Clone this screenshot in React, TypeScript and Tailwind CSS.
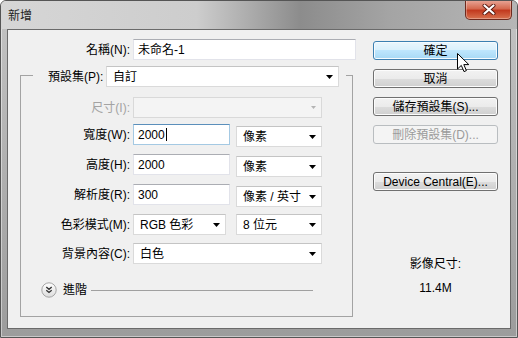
import type { ReactNode } from 'react';
import { clsx } from 'clsx';

function Arrow({ disabled }: { disabled?: boolean }) {
  return disabled ? (
    <svg width="5" height="3" viewBox="0 0 5 3">
      <polygon points="0,0 5,0 2.5,3" fill="#b4b4b4" />
    </svg>
  ) : (
    <svg width="7" height="4" viewBox="0 0 7 4">
      <polygon points="0,0 7,0 3.5,4" fill="#000" />
    </svg>
  );
}

function Combo({
  width,
  value,
  disabled,
  className,
}: {
  width: string;
  value?: string;
  disabled?: boolean;
  className?: string;
}) {
  return (
    <div
      className={clsx(
        'flex h-[21px] shrink-0 items-center justify-between border pl-[6px] pr-[5px]',
        disabled
          ? 'border-[#d9d9d9] bg-[#f4f4f4]'
          : 'border-[#dadada] border-t-[#c4c4c4] bg-white',
        width,
        className,
      )}
    >
      <span className="whitespace-pre leading-none">{value}</span>
      <Arrow disabled={disabled} />
    </div>
  );
}

function TextBox({
  width,
  value,
  focused,
}: {
  width: string;
  value: string;
  focused?: boolean;
}) {
  return (
    <div
      className={clsx(
        'flex h-[21px] shrink-0 items-center border bg-white pl-[4px]',
        focused
          ? 'border-[#a4c9e3] border-t-[#5b8fbb]'
          : 'border-[#e2e3ea] border-t-[#abadb3]',
        width,
      )}
    >
      <span className="leading-none">{value}</span>
      {focused ? <span className="ml-px h-[13px] w-px bg-black" /> : null}
    </div>
  );
}

function Label({ width, children, disabled }: { width: string; children: ReactNode; disabled?: boolean }) {
  return (
    <div
      className={clsx(
        'flex h-[21px] shrink-0 items-center justify-end pr-[3px]',
        disabled ? 'text-[#a3a3a3]' : 'text-black',
        width,
      )}
    >
      {children}
    </div>
  );
}

function Button({
  children,
  hot,
  disabled,
  className,
}: {
  children: ReactNode;
  hot?: boolean;
  disabled?: boolean;
  className?: string;
}) {
  return (
    <div
      className={clsx(
        'flex h-[19px] w-[125px] items-center justify-center rounded-[3px] border leading-none',
        hot
          ? 'border-[#3c7fb1] bg-[linear-gradient(#eaf6fd,#d9f0fc_50%,#bee6fd_50%,#a7d9f5)] shadow-[inset_0_0_0_1px_#f6fbfe]'
          : disabled
            ? 'border-[#b9bdc0] bg-[#f4f4f4] text-[#9b9b9b]'
            : 'border-[#707070] bg-[linear-gradient(#f2f2f2,#ebebeb_50%,#dddddd_50%,#cfcfcf)] shadow-[inset_0_0_0_1px_#fcfcfc]',
        className,
      )}
    >
      {children}
    </div>
  );
}

export default function App() {
  return (
    <div className="relative flex h-[338px] w-[518px] flex-col overflow-hidden rounded-t-[6px] border border-[#555] bg-[linear-gradient(180deg,#c4c4c4,#9c9c9c)] font-['Liberation_Sans','Noto_Sans_CJK_TC',sans-serif] text-[12px] text-black shadow-[inset_0_0_0_1px_rgba(255,255,255,0.45)]">
      {/* title bar */}
      <div className="-mx-px -mt-px flex h-[29px] shrink-0 items-start bg-[linear-gradient(90deg,#d6d6d6,#cdcdcd_38%,#8c8c8c_58%,#a4a4a4_75%,#b6b6b6)]">
        <span className="mt-[7px] ml-[8px] text-[12px] text-[#1e1e1e]">新增</span>
        <div className="ml-auto mr-[6px] flex h-[20px] w-[47px] items-center justify-center rounded-b-[5px] border border-t-0 border-[#6e2a1e] bg-[linear-gradient(#eaa99a,#d56a50_45%,#c23a1f_55%,#d8724f)] shadow-[inset_0_0_0_1px_rgba(255,255,255,0.3)]">
          <svg width="14" height="11" viewBox="0 0 14 11">
            <path d="M2.5 1.5 L11.5 9.5 M11.5 1.5 L2.5 9.5" stroke="#5a1a10" strokeWidth="4" strokeLinecap="round" />
            <path d="M2.5 1.5 L11.5 9.5 M11.5 1.5 L2.5 9.5" stroke="#fff" strokeWidth="2.2" strokeLinecap="round" />
          </svg>
        </div>
      </div>

      {/* client area */}
      <div className="mx-[6px] flex h-[300px] shrink-0 border border-[#6a6a6a] bg-[#f0f0f0]">
        <div className="w-[365px] shrink-0 pt-[9px]">
          <div className="flex">
            <Label width="w-[125px]">名稱(N):</Label>
            <TextBox width="w-[223px]" value="未命名-1" />
          </div>

          <fieldset className="mt-[3px] ml-[12px] h-[254px] w-[333px] border border-[#a3a3a3]">
            <legend className="ml-[12px] flex items-center pt-[3px] pr-[7px] pl-[15px]">
              <div className="flex h-[21px] w-[58px] items-center">預設集(P):</div>
              <Combo width="w-[233px]" value="自訂" />
            </legend>

            <div className="mt-[10px] flex h-[27px] items-start">
              <Label width="w-[112px]" disabled>
                尺寸(I):
              </Label>
              <Combo width="w-[189px]" disabled />
            </div>

            <div className="flex h-[30px] items-start">
              <Label width="w-[112px]">寬度(W):</Label>
              <TextBox width="w-[97px]" value="2000" focused />
              <Combo width="w-[86px]" value="像素" className="mt-[2px] ml-[6px]" />
            </div>

            <div className="flex h-[30px] items-start">
              <Label width="w-[112px]">高度(H):</Label>
              <TextBox width="w-[97px]" value="2000" />
              <Combo width="w-[86px]" value="像素" className="mt-[2px] ml-[6px]" />
            </div>

            <div className="flex h-[30px] items-start">
              <Label width="w-[112px]">解析度(R):</Label>
              <TextBox width="w-[97px]" value="300" />
              <Combo width="w-[86px]" value="像素 / 英寸" className="mt-[2px] ml-[6px]" />
            </div>

            <div className="flex h-[29px] items-start">
              <Label width="w-[112px]">色彩模式(M):</Label>
              <Combo width="w-[93px]" value="RGB 色彩" />
              <Combo width="w-[86px]" value="8 位元" className="ml-[10px]" />
            </div>

            <div className="flex h-[21px] items-start">
              <Label width="w-[112px]">背景內容(C):</Label>
              <Combo width="w-[189px]" value="白色" />
            </div>

            <div className="mt-[18px] flex h-[16px] items-center pl-[20px]">
              <svg width="16" height="16" viewBox="0 0 16 16">
                <defs>
                  <linearGradient id="adv" x1="0" y1="0" x2="0" y2="1">
                    <stop offset="0" stopColor="#ffffff" />
                    <stop offset="1" stopColor="#dcdcdc" />
                  </linearGradient>
                </defs>
                <circle cx="8" cy="8" r="7.2" fill="url(#adv)" stroke="#a5a5a5" />
                <path d="M5.3 5 L8 7.3 L10.7 5 M5.3 8.2 L8 10.5 L10.7 8.2" fill="none" stroke="#333" strokeWidth="1.3" />
              </svg>
              <span className="ml-[6px] leading-none">進階</span>
              <div className="ml-[4px] h-px w-[222px] bg-[#a0a0a0]" />
            </div>
          </fieldset>
        </div>

        <div className="flex w-[125px] shrink-0 flex-col items-center pt-[11px]">
          <Button hot>確定</Button>
          <Button className="mt-[9px]">取消</Button>
          <Button className="mt-[9px]">儲存預設集(S)...</Button>
          <Button className="mt-[9px]" disabled>
            刪除預設集(D)...
          </Button>
          <Button className="mt-[28px]">Device Central(E)...</Button>
          <div className="mt-[65px] leading-[16px]">影像尺寸:</div>
          <div className="mt-[8px] leading-[16px]">11.4M</div>
        </div>
      </div>

      {/* mouse pointer over OK */}
      <svg className="absolute left-[456px] top-[52px]" width="13" height="20" viewBox="0 0 13 20">
        <path d="M0.5 0.5 L0.5 16 L4.3 12.4 L7 18.6 L9.4 17.6 L6.8 11.6 L11.8 11.6 Z" fill="#fff" stroke="#000" strokeLinejoin="round" />
      </svg>
    </div>
  );
}
